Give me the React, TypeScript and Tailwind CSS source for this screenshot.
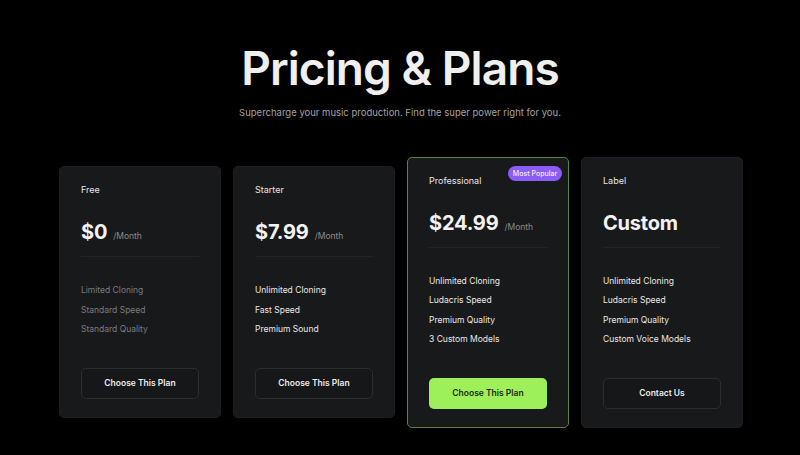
import React from "react";

type Plan = {
  name: string;
  price: string;
  perMonth: boolean;
  features: string[];
  cta: string;
  highlight?: boolean;
  muted?: boolean;
};

const plans: Plan[] = [
  {
    name: "Free",
    price: "$0",
    perMonth: true,
    features: ["Limited Cloning", "Standard Speed", "Standard Quality"],
    cta: "Choose This Plan",
    muted: true,
  },
  {
    name: "Starter",
    price: "$7.99",
    perMonth: true,
    features: ["Unlimited Cloning", "Fast Speed", "Premium Sound"],
    cta: "Choose This Plan",
  },
  {
    name: "Professional",
    price: "$24.99",
    perMonth: true,
    features: ["Unlimited Cloning", "Ludacris Speed", "Premium Quality", "3 Custom Models"],
    cta: "Choose This Plan",
    highlight: true,
  },
  {
    name: "Label",
    price: "Custom",
    perMonth: false,
    features: ["Unlimited Cloning", "Ludacris Speed", "Premium Quality", "Custom Voice Models"],
    cta: "Contact Us",
  },
];

function Card({ plan }: { plan: Plan }) {
  return (
    <div
      className={
        "relative flex w-[162px] flex-col rounded-[5px] bg-[#18191b] px-[21px] pt-[16px] pb-[18px] " +
        (plan.highlight ? "border border-[#5a843d]" : "border border-[#1d1e21]")
      }
    >
      {plan.highlight && (
        <div className="absolute right-[6px] top-[8px] flex h-[15px] w-[54px] items-center justify-center rounded-full bg-[#8b5cf6] text-[7px] font-medium leading-none text-[#f3eefe]">
          Most Popular
        </div>
      )}
      <div className="text-[9px] leading-[14px] text-[#e6e6e6]">{plan.name}</div>
      <div className="mt-[23px] flex items-baseline">
        <span className="text-[20px] font-bold leading-[24px] tracking-[-0.01em] text-[#f2f2f2]">
          {plan.price}
        </span>
        {plan.perMonth && (
          <span className="ml-[6px] text-[8.5px] leading-[10px] text-[#8c8c8c]">/Month</span>
        )}
      </div>
      <div className="mt-[12px] h-px w-full bg-[#232427]" />
      <div className="mt-[24px] flex flex-col">
        {plan.features.map((f) => (
          <div
            key={f}
            className={
              "text-[8.5px] leading-[19.5px] " + (plan.muted ? "text-[#7b7c7f]" : "text-[#e8e8e8]")
            }
          >
            {f}
          </div>
        ))}
      </div>
      <div
        className={
          "mt-[28px] flex h-[31px] w-full items-center justify-center rounded-[5px] text-[8.5px] font-semibold " +
          (plan.highlight
            ? "bg-[#9ef05a] text-[#1c2a12]"
            : "border border-[#2c2d31] bg-[#161719] text-[#ececec]")
        }
      >
        {plan.cta}
      </div>
    </div>
  );
}

export default function App() {
  return (
    <div
      className="flex h-[455px] w-full flex-col items-center overflow-hidden bg-black pt-[45px]"
      style={{ fontFamily: "Inter, 'Noto Sans', sans-serif" }}
    >
      <h1 className="text-[46px] font-semibold leading-[46px] tracking-[-0.02em] text-[#efefef]">
        Pricing &amp; Plans
      </h1>
      <p className="mt-[14px] text-[9.5px] leading-[16px] text-[#a3a3a3]">
        Supercharge your music production. Find the super power right for you.
      </p>
      <div className="mt-[36px] flex h-[270px] items-center gap-[12px] pl-[2px]">
        {plans.map((p) => (
          <Card key={p.name} plan={p} />
        ))}
      </div>
    </div>
  );
}
